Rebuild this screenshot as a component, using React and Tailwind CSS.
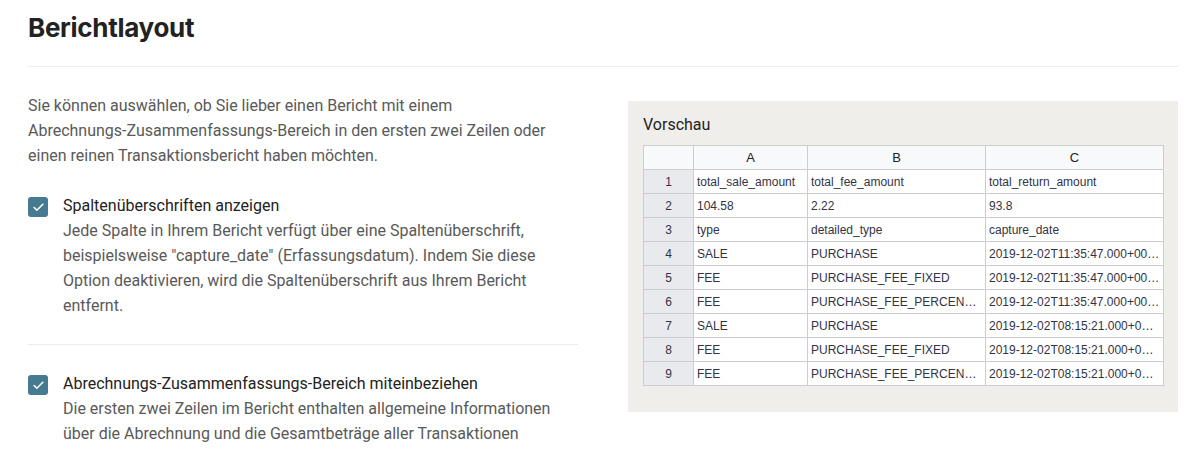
import { Check } from 'lucide-react';

const ROWS = [
  ['total_sale_amount', 'total_fee_amount', 'total_return_amount'],
  ['104.58', '2.22', '93.8'],
  ['type', 'detailed_type', 'capture_date'],
  ['SALE', 'PURCHASE', '2019-12-02T11:35:47.000+00…'],
  ['FEE', 'PURCHASE_FEE_FIXED', '2019-12-02T11:35:47.000+00…'],
  ['FEE', 'PURCHASE_FEE_PERCEN…', '2019-12-02T11:35:47.000+00…'],
  ['SALE', 'PURCHASE', '2019-12-02T08:15:21.000+00…'],
  ['FEE', 'PURCHASE_FEE_FIXED', '2019-12-02T08:15:21.000+00…'],
  ['FEE', 'PURCHASE_FEE_PERCEN…', '2019-12-02T08:15:21.000+00…'],
];

function Option({ title, children }) {
  return (
    <div className="flex gap-[15px]">
      <div className="mt-[4px] flex h-[20px] w-[20px] shrink-0 items-center justify-center rounded-[3px] bg-[#467a91]">
        <Check size={13} strokeWidth={3} className="text-white" />
      </div>
      <div>
        <p className="text-[16px] leading-[25px] text-[#222222]">{title}</p>
        <p className="text-[16px] leading-[25px] text-[#595959]">{children}</p>
      </div>
    </div>
  );
}

function PreviewTable() {
  const cell = 'border border-[#cdcdcd] px-[3px] h-[24px] truncate';
  return (
    <table className="w-[520px] table-fixed border-collapse font-['Liberation_Sans',Arial,sans-serif] text-[12px] text-[#333344]">
      <colgroup>
        <col className="w-[50px]" />
        <col className="w-[114px]" />
        <col className="w-[178px]" />
        <col className="w-[178px]" />
      </colgroup>
      <thead>
        <tr className="bg-[#f8f9fa]">
          <th className={cell}></th>
          <th className={`${cell} font-normal text-[13px] text-[#222]`}>A</th>
          <th className={`${cell} font-normal text-[13px] text-[#222]`}>B</th>
          <th className={`${cell} font-normal text-[13px] text-[#222]`}>C</th>
        </tr>
      </thead>
      <tbody>
        {ROWS.map((r, i) => (
          <tr key={i} className="bg-white">
            <td className={`${cell} bg-[#e8eaed] text-center`}>{i + 1}</td>
            {r.map((v, j) => (
              <td key={j} className={cell}>{v}</td>
            ))}
          </tr>
        ))}
      </tbody>
    </table>
  );
}

export default function App() {
  return (
    <div className="min-h-[451px] bg-white px-[28px] font-['Roboto','Noto_Sans',sans-serif] w-[1178px] box-content">
      <h1 className="pt-[11px] pb-[22px] font-['Inter',sans-serif] text-[26px] font-bold leading-[33px] tracking-[-0.3px] text-[#222222]">Berichtlayout</h1>
      <div className="h-px w-[1150px] bg-[#ececec]" />
      <div className="mt-[26px] flex gap-[50px]">
        <div className="w-[550px]">
          <p className="w-[524px] text-[16px] leading-[25px] text-[#595959]">
            Sie können auswählen, ob Sie lieber einen Bericht mit einem Abrechnungs-Zusammenfassungs-Bereich in den ersten zwei Zeilen oder einen reinen Transaktionsbericht haben möchten.
          </p>
          <div className="mt-[25px]">
            <Option title="Spaltenüberschriften anzeigen">
              Jede Spalte in Ihrem Bericht verfügt über eine Spaltenüberschrift, beispielsweise "capture_date" (Erfassungsdatum). Indem Sie diese Option deaktivieren, wird die Spaltenüberschrift aus Ihrem Bericht entfernt.
            </Option>
          </div>
          <div className="my-[26px] h-px bg-[#ececec]" />
          <Option title="Abrechnungs-Zusammenfassungs-Bereich miteinbeziehen">
            Die ersten zwei Zeilen im Bericht enthalten allgemeine Informationen über die Abrechnung und die Gesamtbeträge aller Transaktionen
          </Option>
        </div>
        <div className="mt-[8px] h-[311px] w-[550px] bg-[#efeeeb] px-[15px] pt-[13px]">
          <h2 className="mb-[9px] text-[16px] leading-[22px] text-[#222222]">Vorschau</h2>
          <PreviewTable />
        </div>
      </div>
    </div>
  );
}
